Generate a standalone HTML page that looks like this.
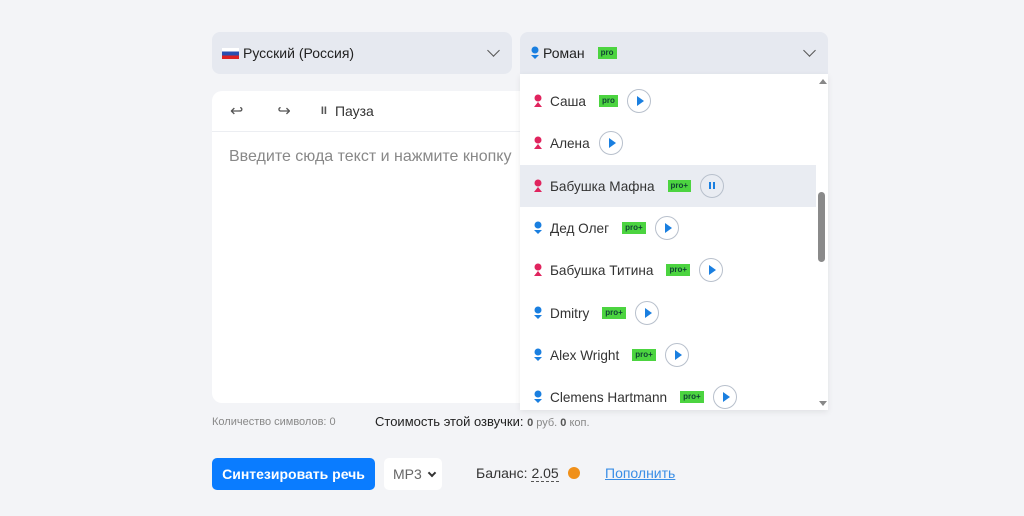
<!DOCTYPE html>
<html><head><meta charset="utf-8"><style>
body{margin:0;width:1024px;height:516px;background:#f3f4f7;font-family:"Liberation Sans",sans-serif;position:relative;overflow:hidden;color:#222}
.sel{position:absolute;top:32px;height:42px;background:#e6e9f0;border-radius:8px;font-size:14px;display:flex;align-items:center}
.chev{position:absolute;right:14px;top:14px;width:8px;height:8px;border-right:1.5px solid #555;border-bottom:1.5px solid #555;transform:rotate(45deg)}
.card{position:absolute;left:212px;top:91px;width:320px;height:312px;background:#fff;border-radius:10px}
.tb{height:40px;border-bottom:1px solid #eceef2;display:flex;align-items:center;font-size:14px;color:#333}
.dd{position:absolute;left:520px;top:74px;width:308px;height:336px;background:#fff;box-shadow:0 2px 6px rgba(0,0,0,.08);overflow:hidden}
.it{position:absolute;left:0;width:296px;height:42px;display:flex;align-items:center;font-size:13.6px;color:#333}
.it .ic{width:10px;margin-left:13px;margin-right:7px}
.b{display:inline-block;background:#4cd440;font-size:8px;font-weight:bold;color:#143;padding:1px 3px;margin-left:13px;line-height:10px}
.p{width:22px;height:22px;border:1.5px solid #b8c0cc;border-radius:50%;margin-left:9px;position:relative}
.p:after{content:"";position:absolute;left:9px;top:6px;border-left:7px solid #1a7fe0;border-top:5px solid transparent;border-bottom:5px solid transparent}
.p.pa:after{border:none;left:8px;top:7px;height:7px;border-left:2px solid #1a7fe0;border-right:2px solid #1a7fe0;width:2px}
</style></head><body>
<div class="sel" style="left:212px;width:300px"><span style="display:inline-block;width:17px;height:11px;margin-left:10px;margin-right:4px;background:linear-gradient(#fff 0 33%,#2a4fb0 33% 66%,#d22 66%)"></span>Русский (Россия)<div class="chev"></div></div>
<div class="sel" style="left:520px;width:308px;border-radius:8px 8px 0 0"><svg width="10" height="14" style="margin-left:10px;margin-right:3px"><circle cx="5" cy="4" r="3.5" fill="#1a7fe0"/><path d="M1 9h8l-4 4z" fill="#1a7fe0"/></svg>Роман<span class="b" style="margin-left:13px">pro</span><div class="chev"></div></div>
<div class="card"><div class="tb"><span style="margin-left:18px;font-size:16px;color:#555">↩</span><span style="margin-left:34px;font-size:16px;color:#555">↪</span><span style="margin-left:30px;font-size:11px;font-weight:bold;color:#555">II</span><span style="margin-left:8px">Пауза</span></div>
<div style="padding:16px 17px;font-size:16px;color:#888;white-space:nowrap">Введите сюда текст и нажмите кнопку</div></div>
<div class="dd">
<div style="position:absolute;left:0;top:91px;width:296px;height:42px;background:#e9ecf2"></div>
<div style="position:absolute;left:298px;top:118px;width:7px;height:70px;background:#8a8a8a;border-radius:4px"></div>
<div style="position:absolute;left:299px;top:5px;border-bottom:5px solid #888;border-left:4px solid transparent;border-right:4px solid transparent"></div>
<div style="position:absolute;left:299px;top:327px;border-top:5px solid #888;border-left:4px solid transparent;border-right:4px solid transparent"></div>
</div>
<div style="position:absolute;left:520px;top:74px">
<div class="it" style="top:6px"><svg class="ic" width="10" height="14"><circle cx="5" cy="4" r="3.5" fill="#e0245e"/><path d="M1 13l4-5 4 5z" fill="#e0245e"/></svg>Саша<span class="b">pro</span><div class="p"></div></div>
<div class="it" style="top:48px"><svg class="ic" width="10" height="14"><circle cx="5" cy="4" r="3.5" fill="#e0245e"/><path d="M1 13l4-5 4 5z" fill="#e0245e"/></svg>Алена<div class="p"></div></div>
<div class="it" style="top:91px"><svg class="ic" width="10" height="14"><circle cx="5" cy="4" r="3.5" fill="#e0245e"/><path d="M1 13l4-5 4 5z" fill="#e0245e"/></svg>Бабушка Мафна<span class="b">pro+</span><div class="p pa"></div></div>
<div class="it" style="top:133px"><svg class="ic" width="10" height="14"><circle cx="5" cy="4" r="3.5" fill="#1a7fe0"/><path d="M1 9h8l-4 4z" fill="#1a7fe0"/></svg>Дед Олег<span class="b">pro+</span><div class="p"></div></div>
<div class="it" style="top:175px"><svg class="ic" width="10" height="14"><circle cx="5" cy="4" r="3.5" fill="#e0245e"/><path d="M1 13l4-5 4 5z" fill="#e0245e"/></svg>Бабушка Титина<span class="b">pro+</span><div class="p"></div></div>
<div class="it" style="top:218px"><svg class="ic" width="10" height="14"><circle cx="5" cy="4" r="3.5" fill="#1a7fe0"/><path d="M1 9h8l-4 4z" fill="#1a7fe0"/></svg>Dmitry<span class="b">pro+</span><div class="p"></div></div>
<div class="it" style="top:260px"><svg class="ic" width="10" height="14"><circle cx="5" cy="4" r="3.5" fill="#1a7fe0"/><path d="M1 9h8l-4 4z" fill="#1a7fe0"/></svg>Alex Wright<span class="b">pro+</span><div class="p"></div></div>
<div class="it" style="top:302px"><svg class="ic" width="10" height="14"><circle cx="5" cy="4" r="3.5" fill="#1a7fe0"/><path d="M1 9h8l-4 4z" fill="#1a7fe0"/></svg>Clemens Hartmann<span class="b">pro+</span><div class="p"></div></div>
</div>
<div style="position:absolute;left:212px;top:416px;font-size:11px;color:#888">Количество символов: 0</div>
<div style="position:absolute;left:375px;top:414px;font-size:13px;color:#222">Стоимость этой озвучки: <span style="font-size:11px;color:#888"><b style="color:#555">0</b> руб. <b style="color:#555">0</b> коп.</span></div>
<div style="position:absolute;left:212px;top:458px;width:163px;height:32px;background:#0a7cff;border-radius:5px;color:#fff;font-size:14px;font-weight:bold;line-height:32px;text-align:center">Синтезировать речь</div>
<div style="position:absolute;left:384px;top:458px;width:58px;height:32px;background:#fff;border-radius:5px;font-size:14px;color:#666;line-height:32px"><span style="margin-left:9px">MP3</span><span style="position:absolute;right:7px;top:12px;width:4px;height:4px;border-right:2px solid #333;border-bottom:2px solid #333;transform:rotate(45deg)"></span></div>
<div style="position:absolute;left:476px;top:465px;font-size:14px;color:#333">Баланс: <span style="border-bottom:1px dashed #555">2.05</span></div>
<div style="position:absolute;left:568px;top:467px;width:12px;height:12px;border-radius:50%;background:#f0901a"></div>
<div style="position:absolute;left:605px;top:465px;font-size:14px;color:#3a8ee6;text-decoration:underline">Пополнить</div>
</body></html>
